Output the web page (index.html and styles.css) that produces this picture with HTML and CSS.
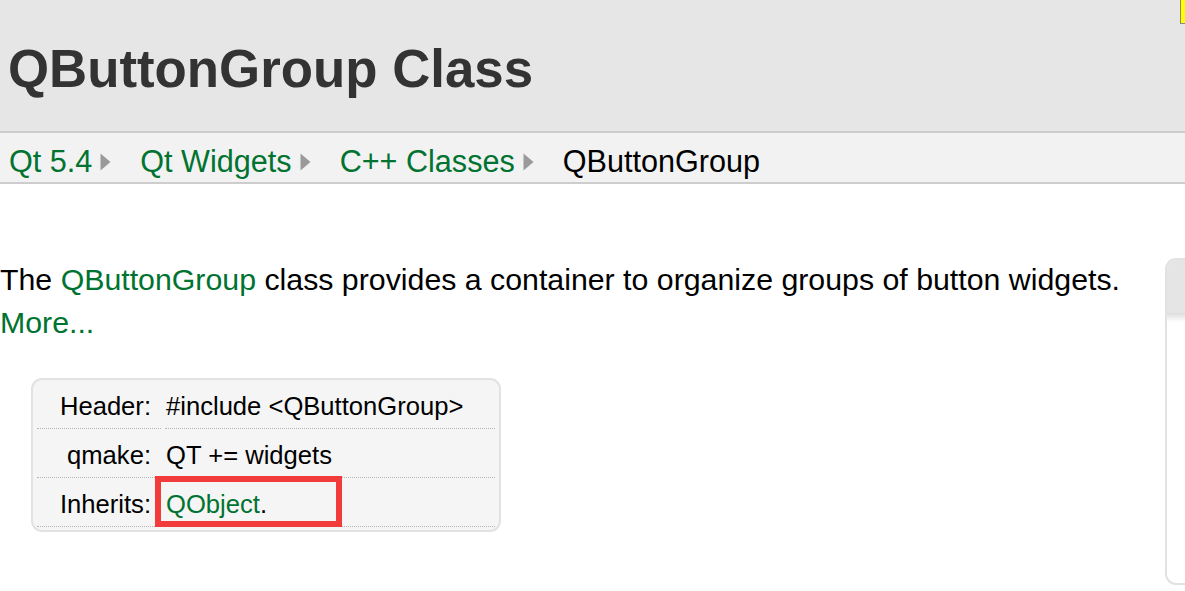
FILE: index.html
```html
<!DOCTYPE html>
<html>
<head>
<meta charset="utf-8">
<title>QButtonGroup Class</title>
<link rel="stylesheet" href="styles.css">
</head>
<body>
<span class="marker"></span>
<header class="title-bar">
  <h1 class="title">QButtonGroup Class</h1>
</header>
<nav class="crumbs">
  <a class="crumb" href="#">Qt 5.4</a>
  <svg class="sep" width="11" height="18" viewBox="0 0 11 18"><polygon points="0.5,0.5 10.5,9 0.5,17.5" fill="#9a9a9a"/></svg>
  <a class="crumb" href="#">Qt Widgets</a>
  <svg class="sep" width="11" height="18" viewBox="0 0 11 18"><polygon points="0.5,0.5 10.5,9 0.5,17.5" fill="#9a9a9a"/></svg>
  <a class="crumb" href="#">C++ Classes</a>
  <svg class="sep" width="11" height="18" viewBox="0 0 11 18"><polygon points="0.5,0.5 10.5,9 0.5,17.5" fill="#9a9a9a"/></svg>
  <span class="crumb current">QButtonGroup</span>
</nav>
<div class="content">
  <main class="main">
    <p class="brief">The <a href="#">QButtonGroup</a> class provides a container to organize groups of button widgets. <a href="#">More...</a></p>
    <table class="info">
      <tr><td class="label">Header:</td><td class="value">#include &lt;QButtonGroup&gt;</td></tr>
      <tr><td class="label">qmake:</td><td class="value">QT += widgets</td></tr>
      <tr><td class="label">Inherits:</td><td class="value hl-cell"><a href="#">QObject</a>.<span class="highlight"></span></td></tr>
    </table>
  </main>
  <aside class="sidebar">
    <div class="sidebar-head"></div>
    <div class="sidebar-shade"></div>
  </aside>
</div>
</body>
</html>
```
FILE: styles.css
```css
html, body {
  margin: 0;
  padding: 0;
  background: #fff;
  overflow: hidden;
}
body {
  font-family: "Liberation Sans", Arial, sans-serif;
  color: #000;
  position: relative;
}
a {
  color: #007330;
  text-decoration: none;
}
.marker {
  position: absolute;
  top: 0;
  right: 0;
  width: 4px;
  height: 23px;
  background: #ffff00;
  border-left: 1px solid #8a8a6a;
  border-bottom: 1px solid #8a8a8a;
}
.title-bar {
  background: #e6e6e6;
  height: 131px;
  border-bottom: 2px solid #cdcdcd;
  box-sizing: content-box;
}
.title {
  margin: 0;
  padding: 40px 0 0 8px;
  font-size: 52.8px;
  line-height: 58px;
  font-weight: bold;
  color: #333;
}
.crumbs {
  display: flex;
  align-items: center;
  background: #f2f2f2;
  height: 41px;
  padding: 8px 0 0 9px;
  border-bottom: 2px solid #cdcdcd;
  font-size: 30.6px;
  line-height: 41px;
}
.crumb.current {
  color: #000;
}
.sep {
  margin: 0 29px 0 8px;
  filter: blur(0.6px);
}
.content {
  display: flex;
  padding-top: 74px;
}
.main {
  flex: 0 0 1150px;
}
.brief {
  margin: 0;
  font-size: 30.3px;
  line-height: 43px;
  width: 1150px;
}
.info {
  margin: 34px 0 0 31px;
  width: 470px;
  border: 2px solid #e2e2e2;
  border-radius: 11px;
  background: #f5f5f5;
  border-spacing: 4px 0;
  padding: 0 0 3px 0;
  font-size: 25.6px;
  line-height: 30px;
}
.info td {
  padding: 11px 0 7px 0;
  border-bottom: 1px dotted #b5b5b5;
  white-space: nowrap;
}
.info .label {
  width: 114px;
  text-align: right;
  padding-right: 10px;
}
.info .value {
  width: 329px;
  padding-left: 1px;
}
.hl-cell {
  position: relative;
}
.highlight {
  position: absolute;
  left: -10px;
  top: -2px;
  width: 175px;
  height: 39px;
  border: 6px solid #f23b3b;
}
.sidebar {
  flex: 0 0 18px;
  margin-left: 15px;
  height: 323px;
  border: 2px solid #e2e2e2;
  border-right: none;
  border-radius: 11px 0 0 11px;
  overflow: hidden;
  background: #fff;
}
.sidebar-head {
  height: 53px;
  background: #e5e5e5;
}
.sidebar-shade {
  height: 9px;
  background: linear-gradient(#dcdcdc, #ffffff);
}
```
